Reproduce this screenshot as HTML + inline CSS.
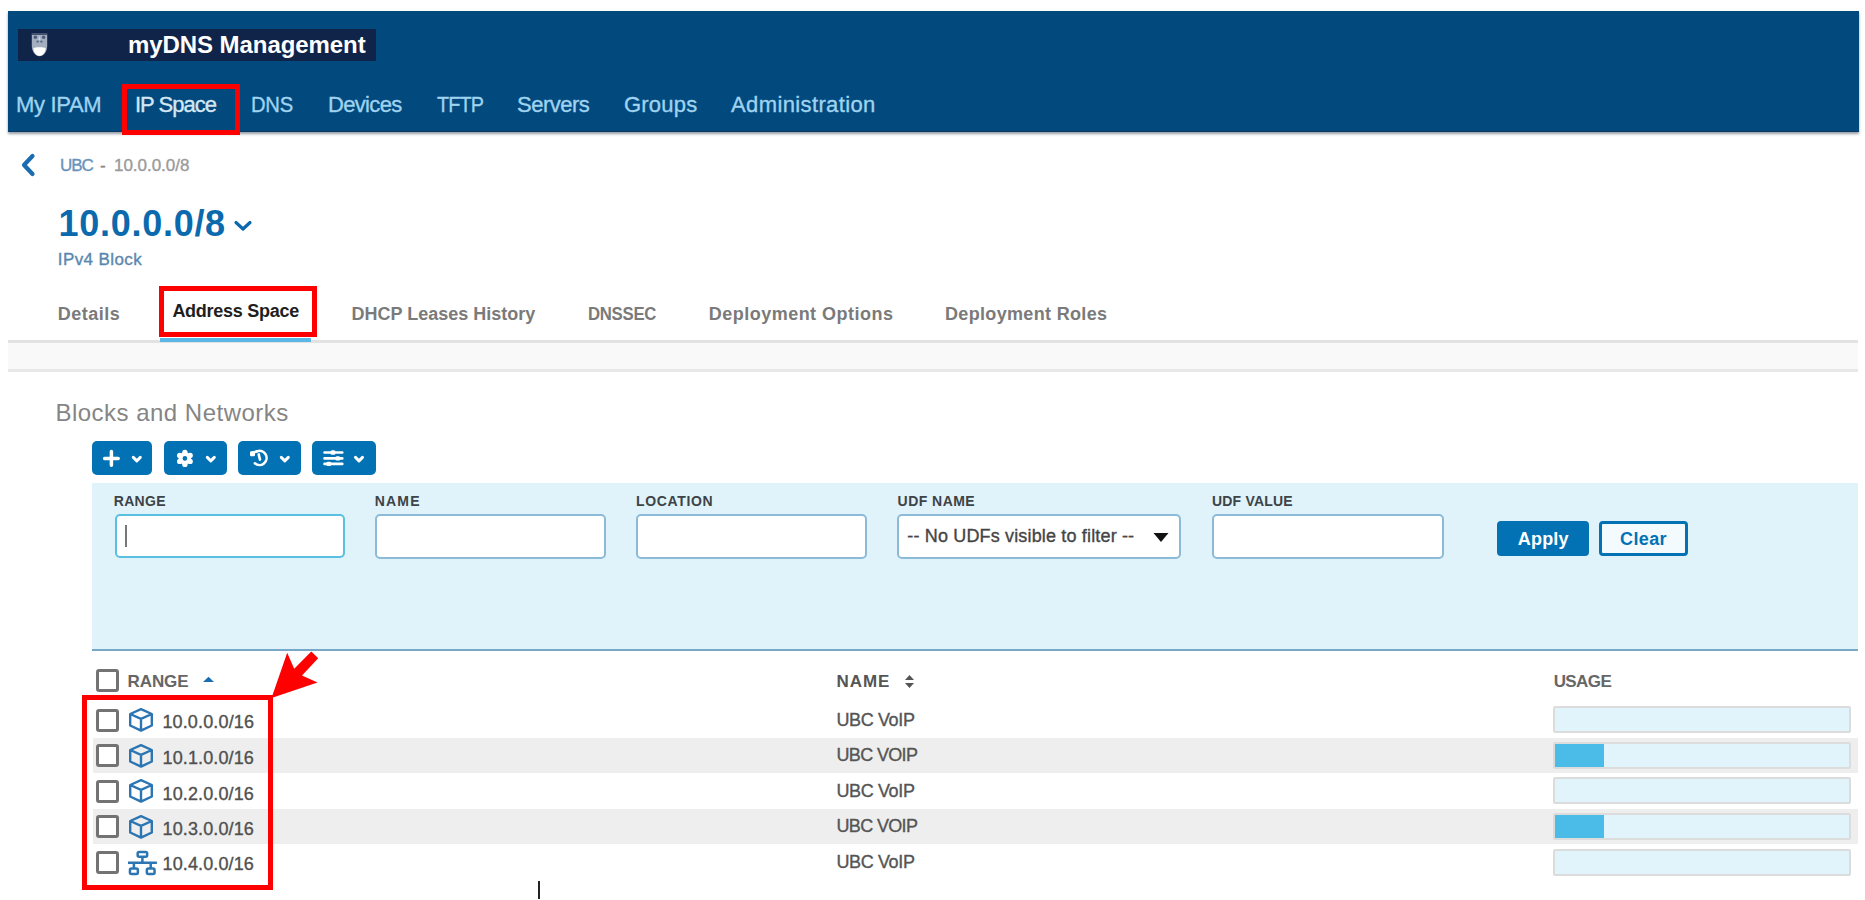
<!DOCTYPE html>
<html><head><meta charset="utf-8">
<style>
*{margin:0;padding:0;box-sizing:border-box;}
html,body{width:1865px;height:900px;overflow:hidden;background:#fff;font-family:"Liberation Sans",sans-serif;}
.a{position:absolute;}
.t{position:absolute;white-space:nowrap;line-height:1;}
.b{font-weight:bold;}
.t:not(.b){-webkit-text-stroke:0.35px currentColor;}
</style></head><body>

<!-- header bar -->
<div class="a" style="left:8px;top:11px;width:1851px;height:120.5px;background:#02497e;border-bottom:1.5px solid #0d3a63;box-shadow:0 1.5px 2.5px rgba(20,40,60,.45);"></div>
<div class="a" style="left:18px;top:29px;width:358px;height:32px;background:#10244a;"></div>
<svg class="a" style="left:31px;top:33px" width="17" height="24" viewBox="0 0 17 24">
 <path d="M0.8 0.5 H16.2 V12.5 C16.2 19 12.5 23.3 8.5 23.3 C4.5 23.3 0.8 19 0.8 12.5 Z" fill="#a3afc0"/>
 <rect x="0.8" y="0.5" width="15.4" height="1.3" fill="#2a3a5a"/>
 <path d="M2.3 15.2 C4.5 13.8 12.5 13.8 14.7 15.2 C14.3 20 11.6 22.8 8.5 22.8 C5.4 22.8 2.7 20 2.3 15.2 Z" fill="#fff"/>
 <circle cx="4.4" cy="4.2" r="1.7" fill="#4c5b78"/><circle cx="12.6" cy="4.2" r="1.7" fill="#4c5b78"/>
 <path d="M8.5 2.5 L9.6 7 L7.4 7 Z" fill="#c8d4e6"/>
 <circle cx="6.6" cy="8.6" r="1.2" fill="#5c6a86"/><circle cx="10.4" cy="8.6" r="1.2" fill="#5c6a86"/>
</svg>
<div class="t b" style="left:128px;top:33px;font-size:24px;letter-spacing:-0.07px;color:#fff;">myDNS Management</div>

<div class="t" style="left:16.0px;top:93.5px;font-size:22px;letter-spacing:-0.34px;color:#9fd3ef;">My IPAM</div>
<div class="t" style="left:135.0px;top:93.5px;font-size:22px;letter-spacing:-0.99px;color:#d5e7f4;">IP Space</div>
<div class="t" style="left:250.6px;top:93.5px;font-size:22px;letter-spacing:-0.3px;transform:scaleX(0.92);transform-origin:0 0;color:#9fd3ef;">DNS</div>
<div class="t" style="left:328.0px;top:93.5px;font-size:22px;letter-spacing:-0.67px;color:#9fd3ef;">Devices</div>
<div class="t" style="left:437px;top:93.5px;font-size:22px;letter-spacing:-0.9px;transform:scaleX(0.9);transform-origin:0 0;color:#9fd3ef;">TFTP</div>
<div class="t" style="left:517.0px;top:93.5px;font-size:22px;letter-spacing:-0.50px;color:#9fd3ef;">Servers</div>
<div class="t" style="left:624.0px;top:93.5px;font-size:22px;letter-spacing:0.20px;color:#9fd3ef;">Groups</div>
<div class="t" style="left:731.0px;top:93.5px;font-size:22px;letter-spacing:0.38px;color:#9fd3ef;">Administration</div>
<div class="a" style="left:122px;top:83.5px;width:118px;height:51px;border:5.5px solid #ff0000;"></div>


<!-- breadcrumb -->
<svg class="a" style="left:19px;top:153px" width="18" height="24" viewBox="0 0 18 24"><path d="M13.5 3 L5 12 L13.5 21" fill="none" stroke="#1a6db0" stroke-width="4.2" stroke-linecap="round" stroke-linejoin="round"/></svg>
<div class="t" style="left:60.0px;top:157.0px;letter-spacing:-1.00px;font-size:17px;color:#6a93bb;">UBC</div>
<div class="t" style="left:100.0px;top:156.5px;font-size:17px;color:#8a8a8a;">-</div>
<div class="t" style="left:114.0px;top:157.0px;letter-spacing:-0.03px;font-size:17px;color:#9a9a9a;">10.0.0.0/8</div>

<!-- title -->
<div class="t b" style="left:58.6px;top:206.2px;letter-spacing:0.71px;font-size:36px;color:#0b69ad;">10.0.0.0/8</div>
<svg class="a" style="left:233px;top:219px" width="20" height="14" viewBox="0 0 20 14"><path d="M3 3.5 L10 10 L17 3.5" fill="none" stroke="#0b69ad" stroke-width="3.2" stroke-linecap="round" stroke-linejoin="round"/></svg>
<div class="t" style="left:57.8px;top:251.0px;letter-spacing:0.40px;font-size:17px;color:#5a87ae;">IPv4 Block</div>

<!-- tabs -->
<div class="t b" style="left:57.7px;top:304.5px;letter-spacing:0.52px;font-size:18px;color:#7a7a7a;">Details</div>
<div class="t b" style="left:172.4px;top:302.0px;letter-spacing:-0.27px;font-size:18px;color:#1e1e1e;">Address Space</div>
<div class="t b" style="left:351.6px;top:304.5px;font-size:18px;color:#7a7a7a;">DHCP Leases History</div>
<div class="t b" style="left:587.5px;top:304.5px;letter-spacing:-0.3px;transform:scaleX(0.93);transform-origin:0 0;font-size:18px;color:#7a7a7a;">DNSSEC</div>
<div class="t b" style="left:708.7px;top:304.5px;letter-spacing:0.49px;font-size:18px;color:#7a7a7a;">Deployment Options</div>
<div class="t b" style="left:945.0px;top:304.5px;letter-spacing:0.33px;font-size:18px;color:#7a7a7a;">Deployment Roles</div>
<div class="a" style="left:8px;top:340px;width:1850px;height:32px;background:#f9f9f9;border-top:3px solid #e2e2e2;border-bottom:3px solid #e8e8e8;"></div>
<div class="a" style="left:160px;top:338px;width:151px;height:4px;background:#5bb8e6;"></div>
<div class="a" style="left:158.5px;top:286px;width:158.5px;height:51px;border:5.4px solid #ff0000;"></div>

<div class="t" style="left:55.4px;top:401.0px;letter-spacing:0.49px;font-size:24px;color:#858585;-webkit-text-stroke:0;">Blocks and Networks</div>

<!-- toolbar buttons -->
<div class="a" style="left:92px;top:441px;width:60px;height:34px;background:#0272b5;border-radius:5px;"></div>
<div class="a" style="left:164px;top:441px;width:63px;height:34px;background:#0272b5;border-radius:5px;"></div>
<div class="a" style="left:238px;top:441px;width:63px;height:34px;background:#0272b5;border-radius:5px;"></div>
<div class="a" style="left:312px;top:441px;width:64px;height:34px;background:#0272b5;border-radius:5px;"></div>
<svg class="a" style="left:92px;top:441px" width="284" height="34" viewBox="0 0 284 34" fill="none" stroke="#fff" stroke-linecap="round" stroke-linejoin="round">
 <path d="M19.4 10.6 V24.2 M12.6 17.4 H26.2" stroke-width="3.5"/>
 <path d="M41.3 16.4 L44.8 19.8 L48.3 16.4" stroke-width="3"/>
 <path d="M115.3 16.4 L118.8 19.8 L122.3 16.4" stroke-width="3"/>
 <path d="M189.3 16.4 L192.8 19.8 L196.3 16.4" stroke-width="3"/>
 <path d="M263.5 16.4 L267 19.8 L270.5 16.4" stroke-width="3"/>
 <path d="M165 10.3 A7.1 7.1 0 1 1 162.8 22.3" stroke-width="2.5"/>
 <path d="M160.8 11.8 L165 10.3" stroke-width="2.5"/>
 <rect x="158" y="10.2" width="5" height="5" rx="1.2" fill="#fff" stroke="none"/>
 <path d="M166.7 13.4 L168 18.6" stroke-width="2.6"/>
 <path d="M232.5 11.5 H250.3 M232.5 17.4 H250.3 M232.5 22.9 H250.3" stroke-width="2.6"/>
 <rect x="238.5" y="9.3" width="5" height="4.4" rx="1.5" fill="#fff" stroke="none"/>
 <rect x="243.3" y="15.2" width="5" height="4.4" rx="1.5" fill="#fff" stroke="none"/>
 <rect x="234.3" y="20.7" width="5" height="4.4" rx="1.5" fill="#fff" stroke="none"/>
 <g transform="translate(92.9 17.4)" fill="#fff" stroke="none">
  <circle r="6.2"/>
  <circle cx="0" cy="-6" r="2.7"/><circle cx="5.2" cy="-3" r="2.7"/><circle cx="5.2" cy="3" r="2.7"/>
  <circle cx="0" cy="6" r="2.7"/><circle cx="-5.2" cy="3" r="2.7"/><circle cx="-5.2" cy="-3" r="2.7"/>
  <circle r="2.3" fill="#0272b5"/>
 </g>
</svg>

<!-- filter panel -->
<div class="a" style="left:92px;top:483px;width:1766px;height:168px;background:#e0f3fa;border-bottom:2.5px solid #78a8c8;"></div>
<div class="t b" style="left:113.8px;top:494.0px;letter-spacing:0.30px;font-size:14px;color:#3d4347;">RANGE</div>
<div class="t b" style="left:374.8px;top:494.0px;letter-spacing:1.17px;font-size:14px;color:#3d4347;">NAME</div>
<div class="t b" style="left:636.0px;top:494.0px;letter-spacing:0.66px;font-size:14px;color:#3d4347;">LOCATION</div>
<div class="t b" style="left:897.6px;top:494.0px;letter-spacing:0.46px;font-size:14px;color:#3d4347;">UDF NAME</div>
<div class="t b" style="left:1212.0px;top:494.0px;letter-spacing:0.19px;font-size:14px;color:#3d4347;">UDF VALUE</div>
<div class="a" style="left:115px;top:514px;width:230px;height:44px;background:#fff;border:2.5px solid #58c0e0;border-radius:5px;"></div>
<div class="a" style="left:125px;top:525px;width:2px;height:22px;background:#777;"></div>
<div class="a" style="left:375px;top:514px;width:231px;height:45px;background:#fff;border:2px solid #8cbbd8;border-radius:5px;"></div>
<div class="a" style="left:636px;top:514px;width:231px;height:45px;background:#fff;border:2px solid #8cbbd8;border-radius:5px;"></div>
<div class="a" style="left:897px;top:514px;width:284px;height:45px;background:#fff;border:2px solid #8cbbd8;border-radius:5px;"></div>
<div class="t" style="left:907.3px;top:527.0px;letter-spacing:0.16px;font-size:18px;color:#454545;">-- No UDFs visible to filter --</div>
<svg class="a" style="left:1152px;top:532px" width="18" height="11" viewBox="0 0 18 11"><path d="M1.5 1 H16.5 L9 10 Z" fill="#111"/></svg>
<div class="a" style="left:1212px;top:514px;width:232px;height:45px;background:#fff;border:2px solid #8cbbd8;border-radius:5px;"></div>
<div class="a" style="left:1497px;top:521px;width:92px;height:35px;background:#0272b5;border-radius:4px;"></div>
<div class="t b" style="left:1517.7px;top:529.5px;letter-spacing:0.23px;font-size:18px;color:#fff;">Apply</div>
<div class="a" style="left:1599px;top:521px;width:89px;height:35px;background:#f4fbfe;border:3px solid #0272b5;border-radius:4px;"></div>
<div class="t b" style="left:1620.0px;top:529.5px;letter-spacing:0.38px;font-size:18px;color:#0272b5;">Clear</div>

<!-- table header -->
<div class="a" style="left:96px;top:669px;width:23px;height:23px;border:3px solid #737373;border-radius:3px;background:#fff;"></div>
<div class="t b" style="left:127.6px;top:672.6px;letter-spacing:-0.10px;font-size:17px;color:#666;">RANGE</div>
<svg class="a" style="left:202px;top:676px" width="13" height="7" viewBox="0 0 13 7"><path d="M1 6 L6.5 0.8 L12 6 Z" fill="#1a6db0"/></svg>
<div class="t b" style="left:836.4px;top:672.6px;letter-spacing:1.00px;font-size:17px;color:#555;">NAME</div>
<svg class="a" style="left:904px;top:674px" width="11" height="15" viewBox="0 0 11 15"><path d="M1 6 L5.5 1 L10 6 Z M1 9 L5.5 14 L10 9 Z" fill="#555"/></svg>
<div class="t b" style="left:1553.7px;top:672.8px;letter-spacing:-0.60px;font-size:17px;color:#666;">USAGE</div>

<!-- rows -->
<div class="a" style="left:96px;top:708.8px;width:23px;height:23px;border:3px solid #737373;border-radius:3px;background:#fff;"></div>
<svg class="a" style="left:128px;top:707.3px" width="26" height="26" viewBox="0 0 26 26"><path d="M13 2.2 L23.8 7 V18.5 L13 23.6 L2.2 18.5 V7 Z M2.2 7 L13 11.8 L23.8 7 M13 11.8 V23.6" fill="none" stroke="#2b76b2" stroke-width="2.4" stroke-linejoin="round"/></svg>
<div class="t" style="left:162.4px;top:713.1px;letter-spacing:0.15px;font-size:18px;color:#505050;">10.0.0.0/16</div>
<div class="t" style="left:836.4px;top:711.1px;letter-spacing:-0.36px;font-size:18px;color:#555;">UBC VoIP</div>
<div class="a" style="left:1553px;top:706.3px;width:298px;height:27px;background:#e1f3fb;border:2px solid #dcdcdc;border-radius:2px;"></div>
<div class="a" style="left:93px;top:737.8px;width:1765px;height:35.5px;background:#eeeeee;"></div>
<div class="a" style="left:96px;top:744.3px;width:23px;height:23px;border:3px solid #737373;border-radius:3px;background:#fff;"></div>
<svg class="a" style="left:128px;top:742.8px" width="26" height="26" viewBox="0 0 26 26"><path d="M13 2.2 L23.8 7 V18.5 L13 23.6 L2.2 18.5 V7 Z M2.2 7 L13 11.8 L23.8 7 M13 11.8 V23.6" fill="none" stroke="#2b76b2" stroke-width="2.4" stroke-linejoin="round"/></svg>
<div class="t" style="left:162.6px;top:749.0px;letter-spacing:0.12px;font-size:18px;color:#505050;">10.1.0.0/16</div>
<div class="t" style="left:836.4px;top:746.3px;letter-spacing:-0.63px;font-size:18px;color:#555;">UBC VOIP</div>
<div class="a" style="left:1553px;top:741.8px;width:298px;height:27px;background:#e1f3fb;border:2px solid #dcdcdc;border-radius:2px;"></div>
<div class="a" style="left:1555px;top:743.8px;width:49px;height:23px;background:#4bbce8;"></div>
<div class="a" style="left:96px;top:779.9px;width:23px;height:23px;border:3px solid #737373;border-radius:3px;background:#fff;"></div>
<svg class="a" style="left:128px;top:778.4px" width="26" height="26" viewBox="0 0 26 26"><path d="M13 2.2 L23.8 7 V18.5 L13 23.6 L2.2 18.5 V7 Z M2.2 7 L13 11.8 L23.8 7 M13 11.8 V23.6" fill="none" stroke="#2b76b2" stroke-width="2.4" stroke-linejoin="round"/></svg>
<div class="t" style="left:162.6px;top:784.6px;letter-spacing:0.12px;font-size:18px;color:#505050;">10.2.0.0/16</div>
<div class="t" style="left:836.4px;top:782.4px;letter-spacing:-0.36px;font-size:18px;color:#555;">UBC VoIP</div>
<div class="a" style="left:1553px;top:777.4px;width:298px;height:27px;background:#e1f3fb;border:2px solid #dcdcdc;border-radius:2px;"></div>
<div class="a" style="left:93px;top:808.9px;width:1765px;height:35.5px;background:#eeeeee;"></div>
<div class="a" style="left:96px;top:815.4px;width:23px;height:23px;border:3px solid #737373;border-radius:3px;background:#fff;"></div>
<svg class="a" style="left:128px;top:813.9px" width="26" height="26" viewBox="0 0 26 26"><path d="M13 2.2 L23.8 7 V18.5 L13 23.6 L2.2 18.5 V7 Z M2.2 7 L13 11.8 L23.8 7 M13 11.8 V23.6" fill="none" stroke="#2b76b2" stroke-width="2.4" stroke-linejoin="round"/></svg>
<div class="t" style="left:162.6px;top:819.8px;letter-spacing:0.12px;font-size:18px;color:#505050;">10.3.0.0/16</div>
<div class="t" style="left:836.4px;top:817.4px;letter-spacing:-0.63px;font-size:18px;color:#555;">UBC VOIP</div>
<div class="a" style="left:1553px;top:812.9px;width:298px;height:27px;background:#e1f3fb;border:2px solid #dcdcdc;border-radius:2px;"></div>
<div class="a" style="left:1555px;top:814.9px;width:49px;height:23px;background:#4bbce8;"></div>
<div class="a" style="left:96px;top:851.0px;width:23px;height:23px;border:3px solid #737373;border-radius:3px;background:#fff;"></div>
<svg class="a" style="left:127px;top:849.0px" width="31" height="28" viewBox="0 0 31 28"><g fill="none" stroke="#2b76b2" stroke-width="2.5" stroke-linejoin="round"><rect x="10.65" y="3.05" width="9.5" height="4.6" rx="1.5"/><rect x="2.95" y="19.45" width="7.9" height="5.5" rx="1.5"/><rect x="19.85" y="19.45" width="7.7" height="5.5" rx="1.5"/><path d="M15.4 7.6 V13.8 M1 13.8 H29.9 M6.9 13.8 V19.4 M23.7 13.8 V19.4"/></g></svg>
<div class="t" style="left:162.6px;top:855.2px;letter-spacing:0.12px;font-size:18px;color:#505050;">10.4.0.0/16</div>
<div class="t" style="left:836.4px;top:852.5px;letter-spacing:-0.36px;font-size:18px;color:#555;">UBC VoIP</div>
<div class="a" style="left:1553px;top:848.5px;width:298px;height:27px;background:#e1f3fb;border:2px solid #dcdcdc;border-radius:2px;"></div>

<!-- annotation -->
<div class="a" style="left:81.5px;top:694.5px;width:191.2px;height:195px;border:5.6px solid #ff0000;"></div>
<svg class="a" style="left:260px;top:640px" width="70" height="70" viewBox="260 640 70 70"><path d="M271.5 698 L287.2 652.8 L294.2 668.8 L311.3 651.5 L318.2 658.3 L302 675.4 L317.5 682.4 Z" fill="#ff0000"/></svg>
<div class="a" style="left:538px;top:881px;width:2.2px;height:18px;background:#222;"></div>
</body></html>
